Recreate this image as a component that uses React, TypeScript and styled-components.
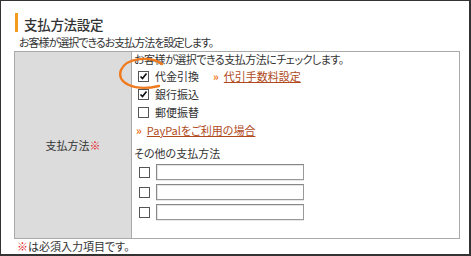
import React from 'react'
import styled, { createGlobalStyle } from 'styled-components'

const GlobalStyle = createGlobalStyle`
  html, body {
    margin: 0;
    padding: 0;
    background: #fff;
  }
  body {
    font-family: 'Noto Sans CJK JP', 'Liberation Sans', sans-serif;
    font-size: 11px;
    font-feature-settings: 'palt';
    color: #333;
  }
`

const Frame = styled.div`
  position: relative;
  box-sizing: border-box;
  width: 471px;
  height: 256px;
  border-top: 1px solid #333;
  border-left: 1px solid #333;
  border-right: 2px solid #333;
  border-bottom: 2px solid #333;
  padding: 11px 10px 0 13px;
`

const Title = styled.h1`
  display: flex;
  align-items: center;
  gap: 6px;
  margin: 0 0 0 1px;
  height: 20px;
  font-size: 13.5px;
  font-weight: 500;
  line-height: 16px;
  letter-spacing: -0.3px;
  color: #333;

  &::before {
    content: '';
    display: block;
    width: 3px;
    height: 19px;
    background: #f39b1f;
  }

  span {
    padding-top: 3px;
  }
`

const Lead = styled.p`
  margin: 3px 0 0 5px;
  line-height: 15px;
  height: 15px;
  letter-spacing: -1px;
`

const Table = styled.div`
  display: grid;
  grid-template-columns: 117px 1fr;
  width: 446px;
  height: 188px;
  box-sizing: border-box;
  border: 1px solid #aaa;
  margin-top: 1px;
`

const HeadCell = styled.div`
  display: flex;
  align-items: center;
  justify-content: center;
  background: #dcdcdc;
  border-right: 1px solid #aaa;
`

const Required = styled.span`
  color: #e51c1c;
`

const BodyCell = styled.div`
  padding: 0 0 0 2px;
`

const Line = styled.div<{ $h?: number; $indent?: number; $gap?: number; $tight?: boolean }>`
  display: flex;
  align-items: center;
  height: ${(p) => p.$h ?? 18}px;
  padding-left: ${(p) => p.$indent ?? 0}px;
  margin-top: ${(p) => p.$gap ?? 0}px;
  letter-spacing: ${(p) => (p.$tight ? '-0.5px' : 'normal')};
  white-space: nowrap;
`

const Box = styled.span`
  position: relative;
  box-sizing: border-box;
  width: 11px;
  height: 11px;
  border: 1px solid #555;
  background: #fff;
  margin-right: 6px;
  flex: none;

  svg {
    position: absolute;
    left: 0;
    top: 0;
  }
`

const Arrow = styled.span`
  color: #f0731a;
  font-size: 11px;
  font-weight: bold;
  margin-right: 6px;
  letter-spacing: -1px;
`

const Link = styled.a`
  color: #b04a1c;
  text-decoration: underline;
`

const Spaced = styled.span`
  margin-left: 14px;
  display: inline-flex;
  align-items: center;
`

const TextInput = styled.span`
  box-sizing: border-box;
  width: 148px;
  height: 16px;
  border: 1px solid #888;
  border-bottom-color: #999;
  border-right-color: #999;
  box-shadow: inset 1px 1px 0 #e4e4e4, 0 1px 0 #e8e8e8;
  background: #fff;
`

const Note = styled.p`
  margin: 0 0 0 3px;
  height: 15px;
  line-height: 15px;
`

const Circle = styled.svg`
  position: absolute;
  left: 0;
  top: 0;
  pointer-events: none;
`

const Check: React.FC<{ checked?: boolean }> = ({ checked }) => (
  <Box>
    {checked && (
      <svg width='9' height='9' viewBox='0 0 9 9'>
        <path d='M1.5 4.5 L3.5 6.5 L7.5 1.5' fill='none' stroke='#111' strokeWidth='1.7' />
      </svg>
    )}
  </Box>
)

const App: React.FC = () => {
  return (
    <>
      <GlobalStyle />
      <Frame>
        <Title>
          <span>支払方法設定</span>
        </Title>
        <Lead>お客様が選択できるお支払方法を設定します。</Lead>
        <Table>
          <HeadCell>
            支払方法<Required>※</Required>
          </HeadCell>
          <BodyCell>
            <Line $h={14} $tight>
              お客様が選択できる支払方法にチェックします。
            </Line>
            <Line $gap={1} $indent={4}>
              <Check checked />
              代金引換
              <Spaced>
                <Arrow>»</Arrow>
                <Link>代引手数料設定</Link>
              </Spaced>
            </Line>
            <Line $indent={4}>
              <Check checked />
              銀行振込
            </Line>
            <Line $indent={4}>
              <Check />
              郵便振替
            </Line>
            <Line $indent={2}>
              <Arrow>»</Arrow>
              <Link>PayPalをご利用の場合</Link>
            </Line>
            <Line $gap={5}>その他の支払方法</Line>
            {[0, 1, 2].map((i) => (
              <Line key={i} $h={20} $indent={5}>
                <Check />
                <TextInput />
              </Line>
            ))}
          </BodyCell>
        </Table>
        <Note>
          <Required>※</Required>は必須入力項目です。
        </Note>
        <Circle width='471' height='256' viewBox='0 0 471 256'>
          <path
            d='M161 63 C150 55, 126 56, 120 69 C115 81, 132 91, 158 85'
            fill='none'
            stroke='#f07a1e'
            strokeWidth='2.4'
            strokeLinecap='round'
          />
        </Circle>
      </Frame>
    </>
  )
}

export default App
